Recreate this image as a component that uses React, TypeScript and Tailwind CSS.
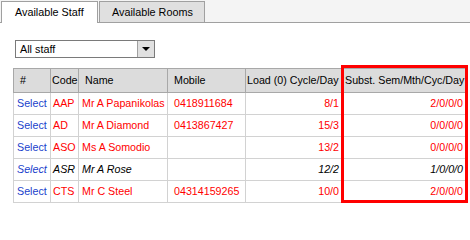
import React from 'react';

type Staff = {
  code: string;
  name: string;
  mobile: string;
  load: string;
  subst: string;
  inactive?: boolean;
};

const staff: Staff[] = [
  { code: 'AAP', name: 'Mr A Papanikolas', mobile: '0418911684', load: '8/1', subst: '2/0/0/0' },
  { code: 'AD', name: 'Mr A Diamond', mobile: '0413867427', load: '15/3', subst: '0/0/0/0' },
  { code: 'ASO', name: 'Ms A Somodio', mobile: '', load: '13/2', subst: '0/0/0/0' },
  { code: 'ASR', name: 'Mr A Rose', mobile: '', load: '12/2', subst: '1/0/0/0', inactive: true },
  { code: 'CTS', name: 'Mr C Steel', mobile: '04314159265', load: '10/0', subst: '2/0/0/0' },
];

const th = 'border border-[#a8a8a8] bg-[#dcdcdc] text-left font-normal whitespace-nowrap overflow-hidden';
const td = 'border border-[#d2d2d2] whitespace-nowrap overflow-hidden';

export default function App() {
  return (
    <div
      className="relative w-[470px] h-[204px] overflow-hidden bg-white text-black"
      style={{ fontFamily: '"Liberation Sans", Arial, sans-serif' }}
    >
      {/* tabs */}
      <div className="flex items-end h-[23px] bg-[#f4f4f4] border-b border-[#a0a0a0] text-[10.8px]">
        <div className="relative z-10 ml-px -mb-px w-[97px] h-[22px] bg-white border-t border-l border-r border-[#a0a0a0] flex items-center pl-[13px]">
          Available Staff
        </div>
        <div className="ml-px w-[106px] h-[21px] bg-[#e0e0e0] border-t border-l border-r border-[#a0a0a0] flex items-center pl-[12px]">
          Available Rooms
        </div>
      </div>

      {/* staff filter */}
      <div className="ml-[15px] mt-[17px] w-[140px] h-[18px] border border-[#7a7a7a] flex items-stretch text-[10.8px]">
        <div className="flex-1 flex items-center pl-[4px]">All staff</div>
        <div className="w-[17px] bg-[#e0e0e0] border-l border-[#a0a0a0] flex items-center justify-center">
          <div className="w-0 h-0 border-l-[4px] border-r-[4px] border-t-[4px] border-l-transparent border-r-transparent border-t-black" />
        </div>
      </div>

      {/* staff table */}
      <table className="ml-[13px] mt-[10px] w-[454px] table-fixed border-collapse text-[10.7px]">
        <colgroup>
          <col className="w-[37px]" />
          <col className="w-[28px]" />
          <col className="w-[89px]" />
          <col className="w-[78px]" />
          <col className="w-[97px]" />
          <col className="w-[125px]" />
        </colgroup>
        <thead>
          <tr className="h-[24px]">
            <th className={`${th} pl-[6px]`}>#</th>
            <th className={`${th} pl-[1px]`}>Code</th>
            <th className={`${th} pl-[6px]`}>Name</th>
            <th className={`${th} pl-[6px]`}>Mobile</th>
            <th className={`${th} pl-[1px]`}>Load (0) Cycle/Day</th>
            <th className={`${th} pl-[2px]`}>Subst. Sem/Mth/Cyc/Day</th>
          </tr>
        </thead>
        <tbody>
          {staff.map((s) => {
            const tone = s.inactive ? 'italic text-black' : 'text-[#ff0000]';
            return (
              <tr key={s.code} className="h-[22px]">
                <td className={`${td} pl-[3px] ${s.inactive ? 'italic text-[#1a3fcc]' : 'text-[#1a3fcc]'}`}>Select</td>
                <td className={`${td} pl-[2px] ${tone}`}>{s.code}</td>
                <td className={`${td} pl-[3px] ${tone}`}>{s.name}</td>
                <td className={`${td} pl-[6px] ${tone}`}>{s.mobile}</td>
                <td className={`${td} pr-[3px] text-right ${tone}`}>{s.load}</td>
                <td className={`${td} pr-[4px] text-right ${tone}`}>{s.subst}</td>
              </tr>
            );
          })}
        </tbody>
      </table>

      {/* highlight around substitution column */}
      <div className="absolute left-[341px] top-[65px] w-[127px] h-[138px] border-[3px] border-[#ff0000] pointer-events-none" />
    </div>
  );
}
